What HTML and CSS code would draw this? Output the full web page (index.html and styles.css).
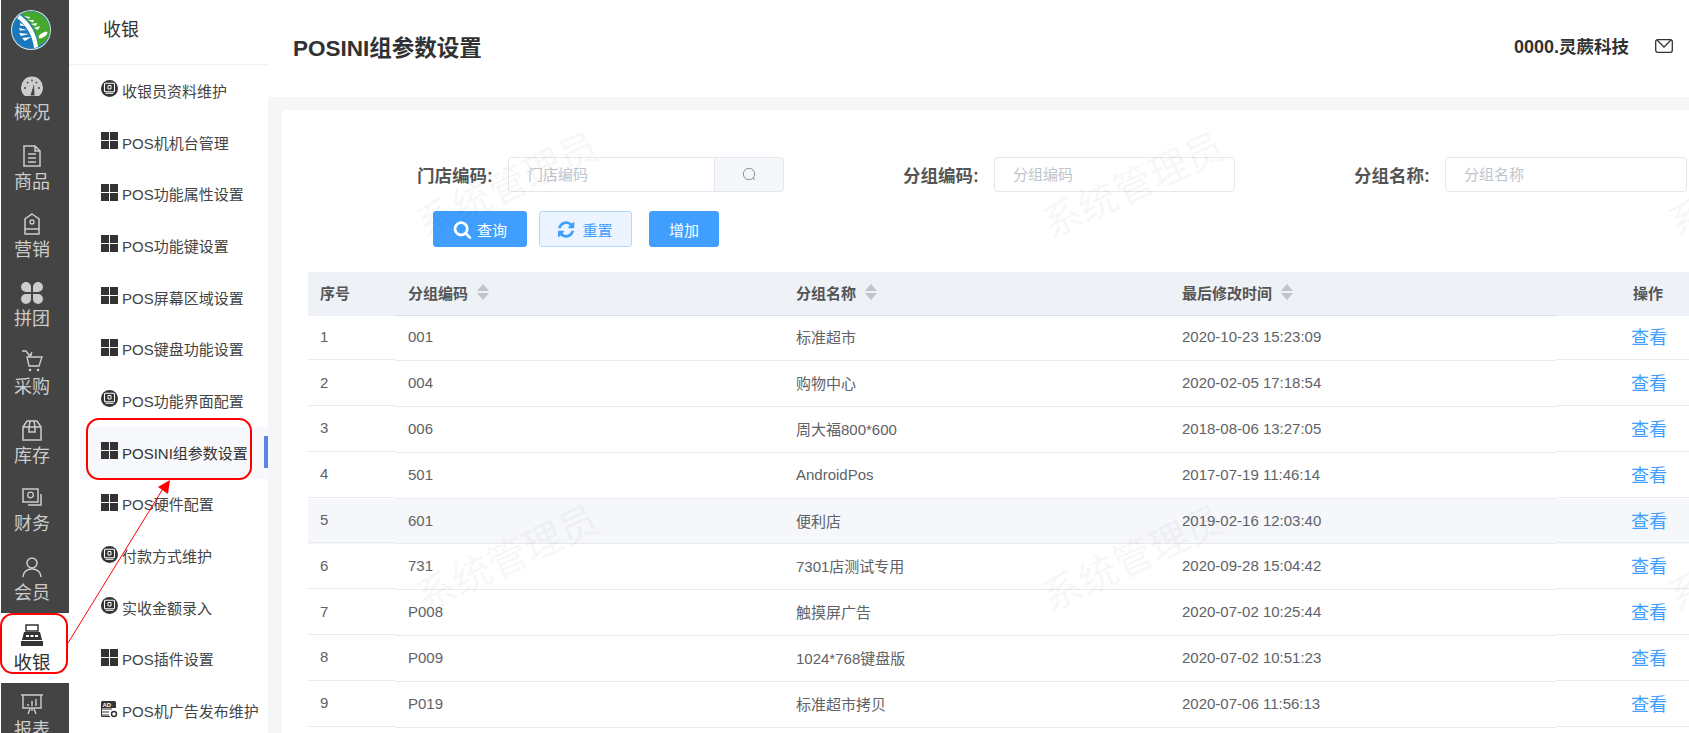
FILE: index.html
```html
<!DOCTYPE html>
<html lang="zh-CN">
<head>
<meta charset="utf-8">
<title>POSINI组参数设置</title>
<link rel="stylesheet" href="styles.css">
</head>
<body>
<svg class="defs" width="0" height="0" aria-hidden="true">
  <symbol id="win" viewBox="0 0 17 17"><path d="M0 0h8v8H0zM9 0h8v8H9zM0 9h8v8H0zM9 9h8v8H9z"/></symbol>
  <symbol id="mon" viewBox="0 0 17 17"><circle cx="8.500" cy="8.500" r="8.500"/><rect x="3.500" y="3.200" width="10" height="8.600" rx="1" fill="none" stroke="#fff" stroke-width="1.100"/><path d="M7 5.500h3v3.500H7zM4.500 13.300h8" fill="none" stroke="#fff" stroke-width="1"/></symbol>
</svg>
<div class="app">
  <nav class="rail">
    <div class="logo">
      <svg width="40" height="40" viewBox="0 0 40 40">
        <circle cx="20" cy="20" r="20" fill="#d8e6dc"/>
        <circle cx="20" cy="20" r="19" fill="#1b78bd"/>
        <path d="M10 4A19 19 0 0 1 37 28Q32 34 27 36Q27 18 10 4Z" fill="#45a82e"/>
        <path d="M9 5Q25 17 27 37L23 38Q21 20 6 8Z" fill="#fff"/>
        <path d="M13 6l6 1-1 2zM17 10l6 0-1 2.500zM20 14l6-1-1 3zM23 18l6-2-2 4zM9 13l6 3-6-.5zM8 18l8 2-7 .5zM8 23l10 1-8 2zM11 28l9-1-6 4z" fill="#fff"/>
        <ellipse cx="32" cy="25" rx="5" ry="2" transform="rotate(-35 32 25)" fill="#fff"/>
      </svg>
    </div>
    <a class="nav-item"><svg class="nav-icon" viewBox="0 0 24 22"><path d="M5 20A11 11 0 1 1 19 20Z" fill="#ccc"/><path d="M10.500 19.500L14 8L14.500 19.500Z" fill="#444"/><path d="M4 12h2M7 6l1.300 1.300M12 3.500v2M17 6l-1.300 1.300M20 12h-2" stroke="#444" stroke-width="1.300"/></svg><span>概况</span></a>
    <a class="nav-item"><svg class="nav-icon" viewBox="0 0 24 22"><path d="M4 1h11l5 5v15H4zM15 1v5h5M8 9h8M8 13h8M8 17h8" fill="none" stroke="#ccc" stroke-width="1.500"/></svg><span>商品</span></a>
    <a class="nav-item"><svg class="nav-icon" viewBox="0 0 24 22"><path d="M12 1l7 5v15H5V6zM5 16h14" fill="none" stroke="#ccc" stroke-width="1.500"/><circle cx="12" cy="9" r="2" fill="none" stroke="#ccc" stroke-width="1.300"/></svg><span>营销</span></a>
    <a class="nav-item"><svg class="nav-icon" viewBox="0 0 24 22"><path d="M11 10H6a5 5 0 1 1 5-5zM13 10h5a5 5 0 1 0-5-5zM11 12H6a5 5 0 1 0 5 5zM13 12h5a5 5 0 1 1-5 5z" fill="#ccc"/></svg><span>拼团</span></a>
    <a class="nav-item"><svg class="nav-icon" viewBox="0 0 24 22"><path d="M2 1h4l3 4 3-0M7 7h15l-3 9H9zM9 7l3-5" fill="none" stroke="#ccc" stroke-width="1.400"/><circle cx="10" cy="20" r="1.300" fill="#ccc"/><circle cx="18" cy="20" r="1.300" fill="#ccc"/></svg><span>采购</span></a>
    <a class="nav-item"><svg class="nav-icon" viewBox="0 0 24 22"><path d="M3 8l4-6h10l4 6v13H3zM3 8h18M10 2l-1 6v5h6V8l-1-6" fill="none" stroke="#ccc" stroke-width="1.500"/></svg><span>库存</span></a>
    <a class="nav-item"><svg class="nav-icon" viewBox="0 0 24 22"><path d="M3 2h15v13H3zM21 7v11H8" fill="none" stroke="#ccc" stroke-width="1.500"/><circle cx="10.500" cy="8" r="2.800" fill="none" stroke="#ccc" stroke-width="1.300"/></svg><span>财务</span></a>
    <a class="nav-item"><svg class="nav-icon" viewBox="0 0 24 22"><circle cx="12" cy="7" r="5" fill="none" stroke="#ccc" stroke-width="1.500"/><path d="M3 21c0-5 4-8 9-8s9 3 9 8" fill="none" stroke="#ccc" stroke-width="1.500"/></svg><span>会员</span></a>
    <a class="nav-item active"><svg class="nav-icon" viewBox="0 0 24 22"><path d="M6 1h12v6H6z" fill="none" stroke="#333" stroke-width="1.500"/><path d="M4 8h16l2 8H2z" fill="#333"/><path d="M1 17h22v5H1z" fill="#333"/><path d="M6 11h3v2H6zM10.500 11h3v2h-3zM15 11h3v2h-3z" fill="#fff"/></svg><span>收银</span></a>
    <a class="nav-item after"><svg class="nav-icon" viewBox="0 0 24 22"><path d="M3 2h18v13H3zM1 2h22M12 15v3M8 21l2-5M16 21l-2-5M8 11v2M12 8v5M16 6v7" fill="none" stroke="#ccc" stroke-width="1.400"/></svg><span>报表</span></a>
  </nav>

  <aside class="submenu">
    <div class="submenu-title">收银</div>
    <ul class="submenu-list">
      <li class="sub"><svg class="sub-icon"><use href="#mon"/></svg>收银员资料维护</li>
      <li class="sub"><svg class="sub-icon"><use href="#win"/></svg>POS机机台管理</li>
      <li class="sub"><svg class="sub-icon"><use href="#win"/></svg>POS功能属性设置</li>
      <li class="sub"><svg class="sub-icon"><use href="#win"/></svg>POS功能键设置</li>
      <li class="sub"><svg class="sub-icon"><use href="#win"/></svg>POS屏幕区域设置</li>
      <li class="sub"><svg class="sub-icon"><use href="#win"/></svg>POS键盘功能设置</li>
      <li class="sub"><svg class="sub-icon"><use href="#mon"/></svg>POS功能界面配置</li>
      <li class="sub current"><svg class="sub-icon"><use href="#win"/></svg>POSINI组参数设置</li>
      <li class="sub"><svg class="sub-icon"><use href="#win"/></svg>POS硬件配置</li>
      <li class="sub"><svg class="sub-icon"><use href="#mon"/></svg>付款方式维护</li>
      <li class="sub"><svg class="sub-icon"><use href="#mon"/></svg>实收金额录入</li>
      <li class="sub"><svg class="sub-icon"><use href="#win"/></svg>POS插件设置</li>
      <li class="sub"><svg class="sub-icon" viewBox="0 0 17 17"><path d="M0 1.500Q0 0 1.500 0h12Q15 0 15 1.500V7H0z" fill="#333"/><path d="M1 8h10M1 11h7M1 14h7M0.500 7v8.500H9" fill="none" stroke="#333"/><circle cx="13" cy="13" r="2.500" fill="none" stroke="#333" stroke-width="1.500"/><text x="1.500" y="6" class="ad-text">AD</text></svg>POS机广告发布维护</li>
    </ul>
  </aside>

  <main class="main">
    <header class="topbar">
      <h1 class="page-title">POSINI组参数设置</h1>
      <div class="user">
        <span class="user-name"><span class="user-code">0000.</span>灵蕨科技</span>
        <svg class="mail" width="18" height="14" viewBox="0 0 18 14"><rect x="0.700" y="0.700" width="16.600" height="12.600" rx="2" fill="none" stroke="#333" stroke-width="1.300"/><path d="M2 1l7 7 7-7" fill="none" stroke="#333" stroke-width="1.300"/></svg>
      </div>
    </header>
    <div class="content">
      <section class="card">
        <form class="filters">
          <div class="field">
            <label class="label">门店编码:</label>
            <div class="input-group">
              <span class="input grow">门店编码</span>
              <span class="append"><svg width="15" height="15" viewBox="0 0 15 15"><circle cx="7" cy="7" r="5.700" fill="none" stroke="#8a8f99" stroke-width="1"/><path d="M11 11l2 2" stroke="#8a8f99"/></svg></span>
            </div>
          </div>
          <div class="field">
            <label class="label">分组编码:</label>
            <span class="input w240">分组编码</span>
          </div>
          <div class="field">
            <label class="label">分组名称:</label>
            <span class="input w241">分组名称</span>
          </div>
        </form>
        <div class="actions">
          <button type="button" class="btn primary query"><svg width="19" height="19" viewBox="0 0 1792 1792"><path fill="#fff" d="M1216 832q0-185-131.500-316.500t-316.500-131.500-316.500 131.500-131.500 316.500 131.500 316.500 316.500 131.500 316.500-131.500 131.500-316.500zm512 832q0 52-38 90t-90 38q-54 0-90-38l-343-342q-179 124-399 124-143 0-273.500-55.500t-225-150-150-225-55.500-273.500 55.500-273.500 150-225 225-150 273.500-55.500 273.500 55.500 225 150 150 225 55.500 273.500q0 220-124 399l343 343q37 37 37 90z"/></svg>查询</button>
          <button type="button" class="btn plain reset"><svg width="19" height="19" viewBox="0 0 1792 1792"><path fill="#409eff" d="M1511 1056q0 5-1 7-64 268-268 434.500t-478 166.500q-146 0-282.500-55t-243.500-157l-129 129q-19 19-45 19t-45-19-19-45v-448q0-26 19-45t45-19h448q26 0 45 19t19 45-19 45l-137 137q71 66 161 102t187 36q134 0 250-65t186-179q11-17 53-117 8-23 30-23h192q13 0 22.500 9.500t9.500 22.500zm25-800v448q0 26-19 45t-45 19h-448q-26 0-45-19t-19-45 19-45l138-138q-148-137-349-137-134 0-250 65t-186 179q-11 17-53 117-8 23-30 23h-199q-13 0-22.500-9.500t-9.500-22.500v-7q65-268 270-434.500t480-166.500q146 0 284 55.500t245 156.500l130-129q19-19 45-19t45 19 19 45z"/></svg>重置</button>
          <button type="button" class="btn primary add">增加</button>
        </div>
        <div class="table">
          <div class="row head">
            <div class="cell fixed">序号</div>
            <div class="cell">分组编码<i class="sort"></i></div>
            <div class="cell">分组名称<i class="sort"></i></div>
            <div class="cell">最后修改时间<i class="sort"></i></div>
            <div class="cell fixed op">操作</div>
          </div>
          <div class="row"><div class="cell fixed">1</div><div class="cell">001</div><div class="cell">标准超市</div><div class="cell">2020-10-23 15:23:09</div><div class="cell fixed op"><a class="link">查看</a></div></div>
          <div class="row"><div class="cell fixed">2</div><div class="cell">004</div><div class="cell">购物中心</div><div class="cell">2020-02-05 17:18:54</div><div class="cell fixed op"><a class="link">查看</a></div></div>
          <div class="row"><div class="cell fixed">3</div><div class="cell">006</div><div class="cell">周大福800*600</div><div class="cell">2018-08-06 13:27:05</div><div class="cell fixed op"><a class="link">查看</a></div></div>
          <div class="row"><div class="cell fixed">4</div><div class="cell">501</div><div class="cell">AndroidPos</div><div class="cell">2017-07-19 11:46:14</div><div class="cell fixed op"><a class="link">查看</a></div></div>
          <div class="row hover"><div class="cell fixed">5</div><div class="cell">601</div><div class="cell">便利店</div><div class="cell">2019-02-16 12:03:40</div><div class="cell fixed op"><a class="link">查看</a></div></div>
          <div class="row"><div class="cell fixed">6</div><div class="cell">731</div><div class="cell">7301店测试专用</div><div class="cell">2020-09-28 15:04:42</div><div class="cell fixed op"><a class="link">查看</a></div></div>
          <div class="row"><div class="cell fixed">7</div><div class="cell">P008</div><div class="cell">触摸屏广告</div><div class="cell">2020-07-02 10:25:44</div><div class="cell fixed op"><a class="link">查看</a></div></div>
          <div class="row"><div class="cell fixed">8</div><div class="cell">P009</div><div class="cell">1024*768键盘版</div><div class="cell">2020-07-02 10:51:23</div><div class="cell fixed op"><a class="link">查看</a></div></div>
          <div class="row"><div class="cell fixed">9</div><div class="cell">P019</div><div class="cell">标准超市拷贝</div><div class="cell">2020-07-06 11:56:13</div><div class="cell fixed op"><a class="link">查看</a></div></div>
        </div>
      </section>
    </div>
  </main>

  <div class="wm wm-a">系统管理员</div>
  <div class="wm wm-b">系统管理员</div>
  <div class="wm wm-c">系统管理员</div>
  <div class="wm wm-d">系统管理员</div>
  <div class="wm wm-e">系统管理员</div>
  <div class="wm wm-f">系统管理员</div>

  <svg class="annot" width="1689" height="733" viewBox="0 0 1689 733">
    <rect x="1" y="614" width="66" height="59" rx="12" fill="none" stroke="#f00" stroke-width="2"/>
    <rect x="87" y="419" width="164" height="60" rx="12" fill="none" stroke="#f00" stroke-width="2"/>
    <path d="M68 643L164 487" fill="none" stroke="#f00" stroke-width="1"/>
    <path d="M170 480L158 487L168 494Z" fill="#f00"/>
  </svg>
</div>
</body>
</html>
```

FILE: styles.css
```css
* { box-sizing: border-box; }
html, body { margin: 0; height: 100%; overflow: hidden; background: #fff; }
body { font-family: "Liberation Sans", "Noto Sans CJK SC", sans-serif; color: #333; }
.defs { position: absolute; }
.app { position: relative; display: flex; height: 733px; width: 1689px; overflow: hidden; }

.rail { width: 68px; margin-left: 1px; flex: none; background: #444; overflow: hidden; height: 733px; }
.logo { height: 70px; padding: 10px 0 0 10px; }
.nav-item { display: flex; flex-direction: column; align-items: center; height: 68.5px; padding: 6px 6px 0 0; color: #ccc; font-size: 18px; line-height: 24px; white-space: nowrap; }
.nav-icon { width: 24px; height: 22px; margin-bottom: 3px; flex: none; }
.nav-item.active { background: #fff; color: #333; margin-top: -5px; height: 70px; padding-top: 11px; font-size: 18.500px; }
.nav-item.active .nav-icon { margin-bottom: 5px; }
.nav-item.after { padding-top: 10px; height: 60px; }

.submenu { width: 199px; flex: none; background: #fff; }
.submenu-title { height: 65px; border-bottom: 1px solid #f0f1f5; padding-left: 34px; font-size: 18px; line-height: 60px; color: #333; }
.submenu-list { list-style: none; margin: 0; padding: 0 0 0 11px; }
.sub { position: relative; display: flex; align-items: center; height: 51.7px; padding: 0 0 1px 21px; font-size: 15px; color: #444; white-space: nowrap; }
.sub-icon { width: 17px; height: 17px; margin: -3px 4px 0 0; flex: none; fill: #333; }
.ad-text { font-size: 6px; fill: #fff; font-weight: 700; }
.current { background: #f7f8fb; color: #333; }
.current::after { content: ""; position: absolute; right: 0; top: 9px; width: 4px; height: 32px; background: #5f84e6; }

.main { flex: 1; min-width: 0; display: flex; flex-direction: column; background: #fff; }
.topbar { height: 97px; flex: none; display: flex; align-items: center; justify-content: space-between; padding: 0 16px 6px 25px; background: #fff; }
.page-title { margin: 0; font-size: 22.500px; font-weight: 700; color: #303133; }
.user { display: flex; align-items: center; gap: 26px; }
.user-name { font-size: 17.500px; font-weight: 700; color: #303133; }
.user-code { font-size: 18px; }
.content { flex: 1; background: #f5f6f8; padding: 13px 0 0 14px; min-height: 0; }
.card { height: 100%; background: #fff; border-radius: 4px 0 0 0; padding: 47px 0 0 26px; }

.filters { display: flex; gap: 119px; height: 35px; margin-left: 109px; }
.field { display: flex; align-items: center; }
.label { width: 91px; flex: none; font-size: 17.500px; font-weight: 700; color: #555; }
.input-group { display: flex; width: 276px; height: 35px; }
.input { display: flex; align-items: center; height: 35px; padding: 0 0 2px 18px; font-size: 15px; color: #c0c4cc; border: 1px solid #e4e7ed; border-radius: 4px; }
.grow { flex: 1; border-radius: 4px 0 0 4px; border-right: 0; padding-left: 19px; }
.w240 { width: 241px; }
.w241 { width: 242px; }
.append { width: 70px; display: flex; align-items: center; justify-content: center; background: #f5f7fa; border: 1px solid #e4e7ed; border-radius: 0 4px 4px 0; }

.actions { display: flex; margin: 19px 0 0 125px; height: 36px; }
.btn { display: flex; align-items: center; justify-content: center; height: 36px; padding: 0; border-radius: 3px; font: 15px "Liberation Sans", "Noto Sans CJK SC", sans-serif; border: 1px solid #409eff; }
.primary { background: #409eff; color: #fff; }
.plain { background: #ecf5ff; color: #409eff; border-color: #b3d8ff; }
.btn svg { margin-right: 5px; }
.query { width: 94px; }
.reset { width: 93px; margin-left: 12px; }
.add { width: 70px; margin-left: 17px; }

.table { margin-top: 25px; font-size: 15px; color: #606266; }
.row { display: grid; grid-template-columns: 87px 388px 386px 387px 1fr; height: 45.8px; }
.cell { display: flex; align-items: center; height: 100%; padding: 0 0 2px 13px; border-bottom: 1px solid #e8eaef; white-space: nowrap; }
.cell.fixed { height: calc(100% - 1px); padding-left: 12px; }
.cell.op { padding-left: 77px; }
.link { color: #409eff; font-size: 18px; margin-left: -2px; }
.hover { background: #f5f7fa; }
.head { height: 43.500px; background: #eef1f6; font-weight: 700; color: #555; }
.head .cell { border-bottom-color: #dcdfe6; padding-bottom: 2px; }
.head .cell.fixed { border-bottom: 0; }
.sort { display: inline-block; position: relative; width: 12px; height: 16px; margin-left: 9px; }
.sort::before, .sort::after { content: ""; position: absolute; left: 0; border: 6px solid transparent; border-top-width: 0; border-bottom: 7px solid #c0c4cc; }
.sort::before { top: 0; }
.sort::after { bottom: 0; border-bottom-width: 0; border-top: 7px solid #c0c4cc; }

.wm { position: absolute; font-size: 39px; line-height: 1; color: rgba(0, 0, 0, .05); transform: rotate(-25deg); white-space: nowrap; pointer-events: none; }
.wm-a { left: 410px; top: 166px; }
.wm-b { left: 1036px; top: 166px; }
.wm-c { left: 1662px; top: 166px; }
.wm-d { left: 410px; top: 539px; }
.wm-e { left: 1036px; top: 539px; }
.wm-f { left: 1662px; top: 539px; }

.annot { position: absolute; left: 0; top: 0; pointer-events: none; }
```
